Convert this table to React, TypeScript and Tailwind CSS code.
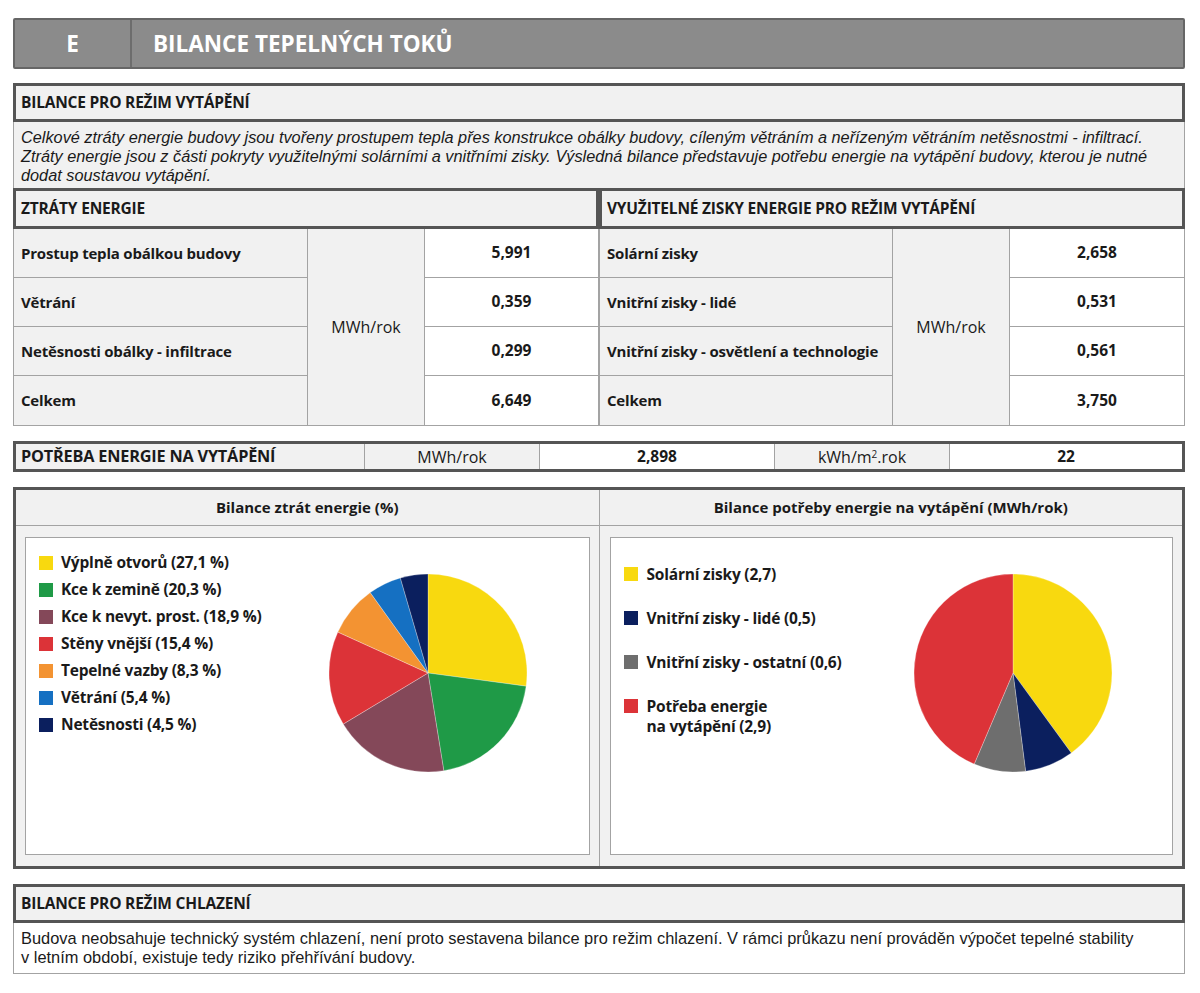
import React from 'react';

const font = { fontFamily: '"Open Sans", "Noto Sans", sans-serif' };
const paraFont = { fontFamily: '"Liberation Sans", Arial, sans-serif' };

type Slice = { label: string; value: number; color: string };

const losses: Slice[] = [
  { label: 'Výplně otvorů (27,1 %)', value: 27.1, color: '#f8d90f' },
  { label: 'Kce k zemině (20,3 %)', value: 20.3, color: '#1f9a47' },
  { label: 'Kce k nevyt. prost. (18,9 %)', value: 18.9, color: '#844859' },
  { label: 'Stěny vnější (15,4 %)', value: 15.4, color: '#dc3338' },
  { label: 'Tepelné vazby (8,3 %)', value: 8.3, color: '#f39332' },
  { label: 'Větrání (5,4 %)', value: 5.4, color: '#1570c2' },
  { label: 'Netěsnosti (4,5 %)', value: 4.5, color: '#0b1f5e' },
];

const demand: Slice[] = [
  { label: 'Solární zisky (2,7)', value: 2.658, color: '#f8d90f' },
  { label: 'Vnitřní zisky - lidé (0,5)', value: 0.531, color: '#0b1f5e' },
  { label: 'Vnitřní zisky - ostatní (0,6)', value: 0.561, color: '#6e6e6e' },
  { label: 'Potřeba energie\nna vytápění (2,9)', value: 2.898, color: '#dc3338' },
];

const heatingText = [
  'Celkové ztráty energie budovy jsou tvořeny prostupem tepla přes konstrukce obálky budovy, cíleným větráním a neřízeným větráním netěsnostmi - infiltrací.',
  'Ztráty energie jsou z části pokryty využitelnými solárními a vnitřními zisky. Výsledná bilance představuje potřebu energie na vytápění budovy, kterou je nutné',
  'dodat soustavou vytápění.',
];

const coolingText = [
  'Budova neobsahuje technický systém chlazení, není proto sestavena bilance pro režim chlazení. V rámci průkazu není prováděn výpočet tepelné stability',
  'v letním období, existuje tedy riziko přehřívání budovy.',
];

function Pie({ data, r = 99 }: { data: Slice[]; r?: number }) {
  const total = data.reduce((s, d) => s + d.value, 0);
  let acc = 0;
  const c = r + 1;
  return (
    <svg width={c * 2} height={c * 2} viewBox={`0 0 ${c * 2} ${c * 2}`}>
      {data.map((d) => {
        const a0 = (acc / total) * Math.PI * 2;
        acc += d.value;
        const a1 = (acc / total) * Math.PI * 2;
        const x0 = c + r * Math.sin(a0);
        const y0 = c - r * Math.cos(a0);
        const x1 = c + r * Math.sin(a1);
        const y1 = c - r * Math.cos(a1);
        const large = a1 - a0 > Math.PI ? 1 : 0;
        return (
          <path
            key={d.label}
            d={`M${c},${c} L${x0},${y0} A${r},${r} 0 ${large} 1 ${x1},${y1} Z`}
            fill={d.color}
            stroke="#ffffff"
            strokeOpacity={0.35}
            strokeWidth={0.8}
          />
        );
      })}
    </svg>
  );
}

const lossRows = [
  ['Prostup tepla obálkou budovy', '5,991'],
  ['Větrání', '0,359'],
  ['Netěsnosti obálky - infiltrace', '0,299'],
  ['Celkem', '6,649'],
];

const gainRows = [
  ['Solární zisky', '2,658'],
  ['Vnitřní zisky - lidé', '0,531'],
  ['Vnitřní zisky - osvětlení a technologie', '0,561'],
  ['Celkem', '3,750'],
];

function Half({
  title,
  rows,
  cols,
}: {
  title: string;
  rows: string[][];
  cols: string;
}) {
  return (
    <div className="flex-1">
      <div className="h-[41px] border-[3px] border-[#555] bg-[#f1f1f1] flex items-center px-[5px] text-[15.5px] font-bold text-[#1a1a1a] tracking-[-0.2px]">
        {title}
      </div>
      <div className={`grid ${cols} grid-rows-4 h-[197px] border-x border-b border-[#a3a3a3]`}>
        {rows.map(([label, value], i) => (
          <React.Fragment key={label}>
            <div
              className={`bg-[#f1f1f1] flex items-center pl-[7px] text-[15px] font-bold text-[#1a1a1a] tracking-[-0.2px] whitespace-nowrap border-r border-[#a3a3a3] ${
                i < 3 ? 'border-b' : ''
              }`}
              style={{ gridColumn: 1, gridRow: i + 1 }}
            >
              {label}
            </div>
            <div
              className={`bg-white flex items-center justify-center text-[15.5px] font-bold text-[#1a1a1a] ${
                i < 3 ? 'border-b border-[#a3a3a3]' : ''
              }`}
              style={{ gridColumn: 3, gridRow: i + 1 }}
            >
              {value}
            </div>
          </React.Fragment>
        ))}
        <div
          className="bg-[#f1f1f1] flex items-center justify-center text-[16px] text-[#1a1a1a] border-r border-[#a3a3a3]"
          style={{ gridColumn: 2, gridRow: '1 / span 4' }}
        >
          MWh/rok
        </div>
      </div>
    </div>
  );
}

function SectionTitle({ children }: { children: React.ReactNode }) {
  return (
    <div className="h-[39px] border-[3px] border-[#555] bg-[#f1f1f1] flex items-center px-[5px] text-[15.5px] font-bold text-[#1a1a1a] tracking-[-0.2px]">
      {children}
    </div>
  );
}

export default function App() {
  return (
    <div className="bg-white w-[1200px] h-[993px] overflow-hidden" style={font}>
      <div className="ml-[13px] w-[1172px] pt-[18px]">
        {/* header */}
        <div className="h-[51px] bg-[#8b8b8b] border-2 border-[#666] rounded-[2px] flex text-white font-bold text-[22.5px]">
          <div className="w-[117px] border-r-2 border-[#6d6d6d] flex items-center justify-center">E</div>
          <div className="flex items-center pl-[21px]">BILANCE TEPELNÝCH TOKŮ</div>
        </div>

        {/* heating balance */}
        <div className="mt-[14px]">
          <SectionTitle>BILANCE PRO REŽIM VYTÁPĚNÍ</SectionTitle>
          <div
            className="bg-[#f1f1f1] border-x border-[#a3a3a3] px-[7px] pt-[6px] pb-[3px] italic text-[16.3px] whitespace-nowrap text-[#1a1a1a]"
            style={paraFont}
          >
            {heatingText.map((line) => (
              <div key={line} className="h-[19px] leading-[19px]">
                {line}
              </div>
            ))}
          </div>
          <div className="flex">
            <Half title="ZTRÁTY ENERGIE" rows={lossRows} cols="grid-cols-[294px_117px_1fr]" />
            <Half title="VYUŽITELNÉ ZISKY ENERGIE PRO REŽIM VYTÁPĚNÍ" rows={gainRows} cols="grid-cols-[293px_117px_1fr]" />
          </div>
        </div>

        {/* energy demand */}
        <div className="mt-[15px] h-[31px] border-[3px] border-[#555] flex text-[16px] text-[#1a1a1a]">
          <div className="w-[349px] bg-[#f1f1f1] flex items-center pl-[5px] font-bold text-[16.3px] tracking-[-0.2px] border-r border-[#a3a3a3]">
            POTŘEBA ENERGIE NA VYTÁPĚNÍ
          </div>
          <div className="w-[175px] bg-[#f1f1f1] flex items-center justify-center border-r border-[#a3a3a3]">MWh/rok</div>
          <div className="w-[235px] bg-white flex items-center justify-center font-bold text-[15.5px] border-r border-[#a3a3a3]">2,898</div>
          <div className="w-[175px] bg-[#f1f1f1] flex items-center justify-center border-r border-[#a3a3a3]">
            <span>
              kWh/m<sup className="text-[10px]">2</sup>.rok
            </span>
          </div>
          <div className="flex-1 bg-white flex items-center justify-center font-bold text-[15.5px]">22</div>
        </div>

        {/* charts */}
        <div className="mt-[15px] h-[382px] border-[3px] border-[#555] bg-[#f1f1f1] flex">
          <div className="flex-1 flex flex-col border-r border-[#a3a3a3]">
            <div className="h-[36px] flex items-center justify-center font-bold text-[15px] text-[#1a1a1a] border-b border-[#a3a3a3]">
              Bilance ztrát energie (%)
            </div>
            <div className="flex-1 p-[11px] pl-[9px] pr-[9px]">
              <div className="h-full bg-white border border-[#a3a3a3] flex">
                <div className="w-[302px] pl-[13px] pt-[16px] flex flex-col gap-[9px]">
                  {losses.map((d) => (
                    <div key={d.label} className="flex items-center gap-[8px] h-[18px] text-[15.5px] font-bold text-[#1a1a1a] tracking-[-0.2px] whitespace-nowrap">
                      <span className="w-[14px] h-[14px] shrink-0" style={{ background: d.color }} />
                      {d.label}
                    </div>
                  ))}
                </div>
                <div className="pt-[35px]">
                  <Pie data={losses} />
                </div>
              </div>
            </div>
          </div>
          <div className="flex-1 flex flex-col">
            <div className="h-[36px] flex items-center justify-center font-bold text-[15px] text-[#1a1a1a] border-b border-[#a3a3a3]">
              Bilance potřeby energie na vytápění (MWh/rok)
            </div>
            <div className="flex-1 p-[11px] pl-[10px] pr-[9px]">
              <div className="h-full bg-white border border-[#a3a3a3] flex">
                <div className="w-[288px] pl-[13px] pt-[26px] flex flex-col gap-[24px]">
                  {demand.map((d) => (
                    <div key={d.label} className="flex items-start gap-[9px] text-[15.5px] leading-[20px] font-bold text-[#1a1a1a] tracking-[-0.2px]">
                      <span className="w-[14px] h-[14px] shrink-0 mt-[3px]" style={{ background: d.color }} />
                      <span className="whitespace-pre-line">{d.label}</span>
                    </div>
                  ))}
                </div>
                <div className="pt-[35px] pl-[14px]">
                  <Pie data={demand} />
                </div>
              </div>
            </div>
          </div>
        </div>

        {/* cooling balance */}
        <div className="mt-[15px]">
          <SectionTitle>BILANCE PRO REŽIM CHLAZENÍ</SectionTitle>
          <div
            className="bg-white border-x border-b border-[#a3a3a3] px-[7px] pt-[6px] pb-[6px] text-[16.4px] whitespace-nowrap text-[#1a1a1a]"
            style={paraFont}
          >
            {coolingText.map((line) => (
              <div key={line} className="h-[19px] leading-[19px]">
                {line}
              </div>
            ))}
          </div>
        </div>
      </div>
    </div>
  );
}
